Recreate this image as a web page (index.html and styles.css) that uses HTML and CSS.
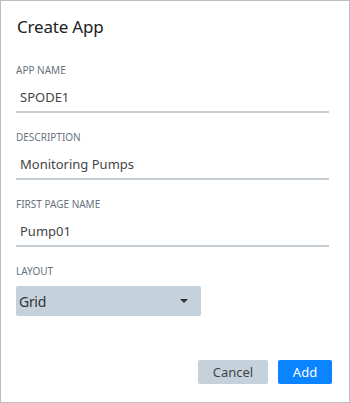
FILE: index.html
```html
<!DOCTYPE html>
<html lang="en">
<head>
    <meta charset="UTF-8">
    <title>Create App</title>
    <link rel="stylesheet" href="styles.css">
</head>
<body>
    <div class="dialog">
        <h1 class="dialog-title">Create App</h1>

        <div class="field">
            <label class="field-label">APP NAME</label>
            <div class="field-input">SPODE1</div>
        </div>

        <div class="field">
            <label class="field-label">DESCRIPTION</label>
            <div class="field-input">Monitoring Pumps</div>
        </div>

        <div class="field">
            <label class="field-label">FIRST PAGE NAME</label>
            <div class="field-input">Pump01</div>
        </div>

        <div class="field">
            <label class="field-label">LAYOUT</label>
            <div class="select">
                <span>Grid</span>
                <span class="caret"></span>
            </div>
        </div>

        <div class="actions">
            <button class="btn btn-cancel">Cancel</button>
            <button class="btn btn-add">Add</button>
        </div>
    </div>
</body>
</html>
```

FILE: styles.css
```css
html, body {
    margin: 0;
    padding: 0;
    background-color: #ffffff;
}
body {
    font-family: "Noto Sans", "Open Sans", sans-serif;
}
.dialog {
    width: 350px;
    height: 403px;
    box-sizing: border-box;
    border: 1px solid #bdbdbd;
    padding: 14px 20px 0 15px;
    display: flex;
    flex-direction: column;
}
.dialog-title {
    margin: 0 0 24px 1px;
    font-size: 17px;
    font-weight: normal;
    letter-spacing: -0.2px;
    color: #222;
    line-height: 24px;
}
.field {
    display: flex;
    flex-direction: column;
    margin-bottom: 17px;
}
.field-label {
    font-size: 10px;
    color: #66737e;
    line-height: 14px;
}
.field-input {
    margin-top: 7px;
    padding: 4px 4px 5px 4px;
    font-size: 13px;
    line-height: 18px;
    color: #444;
    border-bottom: 2px solid #c6ced3;
}
.select {
    margin-top: 8px;
    width: 185px;
    height: 30px;
    box-sizing: border-box;
    background-color: #c5d2db;
    border-radius: 2px;
    display: flex;
    align-items: center;
    justify-content: space-between;
    padding: 0 13px 0 3px;
    font-size: 14px;
    letter-spacing: -0.3px;
    color: #333;
}
.caret {
    width: 0;
    height: 0;
    border-left: 4px solid transparent;
    border-right: 4px solid transparent;
    border-top: 4px solid #333;
}
.actions {
    margin-top: auto;
    margin-right: -3px;
    margin-bottom: 18px;
    display: flex;
    justify-content: flex-end;
    gap: 10px;
}
.btn {
    height: 24px;
    border: none;
    border-radius: 2px;
    font-family: "Noto Sans", "Open Sans", sans-serif;
    font-size: 13px;
    padding: 0;
}
.btn-cancel {
    width: 70px;
    background-color: #c5d2db;
    color: #444;
}
.btn-add {
    width: 54px;
    background-color: #0a84ff;
    color: #ffffff;
}
```
